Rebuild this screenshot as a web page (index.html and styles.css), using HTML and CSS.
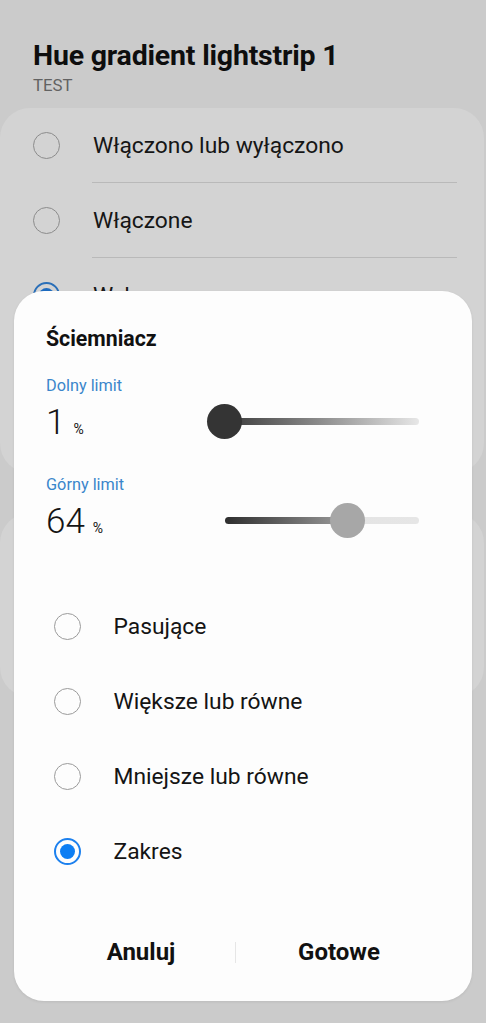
FILE: index.html
```html
<!DOCTYPE html>
<html lang="pl">
<head>
<meta charset="utf-8">
<title>Hue gradient lightstrip 1</title>
<link rel="stylesheet" href="styles.css">
</head>
<body>
<div class="screen">
  <header class="head">
    <h1 class="head-title">Hue gradient lightstrip 1</h1>
    <div class="head-sub">TEST</div>
  </header>

  <section class="card card-main">
    <div class="row">
      <span class="radio"></span>
      <span class="row-text">Włączono lub wyłączono</span>
    </div>
    <div class="row">
      <span class="radio"></span>
      <span class="row-text">Włączone</span>
    </div>
    <div class="row">
      <span class="radio radio-on"></span>
      <span class="row-text">Wyłączone</span>
    </div>
  </section>

  <section class="card card-second"></section>

  <div class="dialog">
    <h2 class="dialog-title">Ściemniacz</h2>

    <div class="limit limit-low">
      <div class="limit-label">Dolny limit</div>
      <div class="limit-row">
        <div class="limit-value"><span class="num">1</span><span class="pct">%</span></div>
        <div class="slider">
          <div class="track track-low"></div>
          <div class="thumb thumb-low" style="left: 0%"></div>
        </div>
      </div>
    </div>

    <div class="limit limit-high">
      <div class="limit-label">Górny limit</div>
      <div class="limit-row">
        <div class="limit-value"><span class="num">64</span><span class="pct">%</span></div>
        <div class="slider">
          <div class="track track-high"></div>
          <div class="thumb thumb-high" style="left: 63.6%"></div>
        </div>
      </div>
    </div>

    <div class="options">
      <div class="option"><span class="radio"></span><span class="option-text">Pasujące</span></div>
      <div class="option"><span class="radio"></span><span class="option-text">Większe lub równe</span></div>
      <div class="option"><span class="radio"></span><span class="option-text">Mniejsze lub równe</span></div>
      <div class="option"><span class="radio radio-on"></span><span class="option-text">Zakres</span></div>
    </div>

    <div class="buttons">
      <button class="btn btn-cancel">Anuluj</button>
      <span class="btn-sep"></span>
      <button class="btn btn-ok">Gotowe</button>
    </div>
  </div>
</div>
</body>
</html>
```

FILE: styles.css
```css
* { box-sizing: border-box; }

html, body {
  margin: 0;
  padding: 0;
  background: #cbcbcb;
}

body {
  font-family: Roboto, "Noto Sans", "Liberation Sans", sans-serif;
  color: #111;
}

.screen {
  position: relative;
  width: 486px;
  height: 1023px;
  overflow: hidden;
  background: #cbcbcb;
}

/* ---------- background page (dimmed) ---------- */
.head {
  padding: 39px 0 0 33px;
}

.head-title {
  margin: 0;
  font-size: 28.5px;
  line-height: 34px;
  font-weight: 700;
  color: #0e0e0e;
  letter-spacing: -0.2px;
}

.head-sub {
  margin-top: 3px;
  font-size: 16.8px;
  line-height: 18px;
  color: #626262;
}

.card {
  background: #d3d3d3;
  border-radius: 30px;
  margin: 0 2px 0 0;
}

.card-main {
  margin-top: 14px;
  height: 365px;
  padding: 0 27px 0 33px;
}

.card-second {
  margin-top: 40px;
  height: 184px;
}

.row {
  display: flex;
  align-items: center;
  height: 75px;
  position: relative;
}

.row + .row::before {
  content: "";
  position: absolute;
  top: -1px;
  left: 59px;
  right: 0;
  height: 1px;
  background: #b9b9b9;
}

.row .radio {
  border-color: #8c8c8c;
}

.row-text {
  margin-left: 33px;
  font-size: 22.8px;
  color: #161616;
}

/* ---------- radio ---------- */
.radio {
  flex: none;
  width: 27px;
  height: 27px;
  border-radius: 50%;
  border: 1.5px solid #9b9b9b;
  position: relative;
}

.radio-on {
  border: 2px solid #1c80ee;
}

.radio-on::after {
  content: "";
  position: absolute;
  left: 50%;
  top: 50%;
  width: 15px;
  height: 15px;
  margin: -7.5px 0 0 -7.5px;
  border-radius: 50%;
  background: #0d7ef3;
}

.row .radio-on { border-color: #2a6fb8; }
.row .radio-on::after { background: #1d6bc0; }

/* ---------- dialog ---------- */
.dialog {
  position: absolute;
  left: 14px;
  top: 291px;
  width: 458px;
  height: 710px;
  background: #fdfdfd;
  border-radius: 30px;
  padding: 36px 0 0 32px;
  box-shadow: 0 1px 3px rgba(0, 0, 0, 0.08);
}

.dialog-title {
  margin: 0;
  font-size: 21.3px;
  line-height: 24px;
  font-weight: 700;
  color: #111;
}

.limit-low { margin-top: 25px; }
.limit-high { margin-top: 32px; }

.limit-label {
  font-size: 16.3px;
  line-height: 20px;
  color: #3a86cb;
}

.limit-row {
  display: flex;
  align-items: center;
  height: 44px;
  margin-top: 3px;
}

.limit-value {
  width: 178.5px;
  display: flex;
  align-items: baseline;
  color: #141414;
  padding-top: 3px;
}

.num {
  font-size: 35px;
  line-height: 36px;
  font-weight: 300;
}

.pct {
  margin-left: 8px;
  font-size: 14px;
}

.slider {
  position: relative;
  width: 194px;
  height: 35px;
}

.track {
  position: absolute;
  left: 0;
  right: 0;
  top: 50%;
  height: 7px;
  margin-top: -3.5px;
  border-radius: 4px;
}

.track-low {
  background: linear-gradient(to right, #3a3a3a 0%, #8e8e8e 50%, #e7e7e7 100%);
}

.track-high {
  background: linear-gradient(to right, #2e2e2e 0%, #9e9e9e 64%, #e4e4e4 64%, #e6e6e6 100%);
}

.thumb {
  position: absolute;
  top: 0;
  width: 35px;
  height: 35px;
  margin-left: -17.5px;
  border-radius: 50%;
}

.thumb-low { background: #343434; }
.thumb-high { background: #a7a7a7; }

.options {
  margin-top: 47px;
  padding-left: 7.5px;
}

.option {
  display: flex;
  align-items: center;
  height: 75px;
}

.option-text {
  margin-left: 33px;
  font-size: 22.8px;
  color: #141414;
}

.buttons {
  display: flex;
  align-items: center;
  height: 60px;
  margin-top: 33px;
  margin-left: -32px;
  padding-left: 33px;
}

.btn {
  border: 0;
  background: none;
  padding: 0;
  font-family: inherit;
  font-size: 24px;
  font-weight: 700;
  color: #111;
  line-height: 30px;
}

.btn-cancel { width: 188px; }
.btn-ok { width: 206px; }

.btn-sep {
  width: 1px;
  height: 21px;
  background: #e6e6e6;
}
```
